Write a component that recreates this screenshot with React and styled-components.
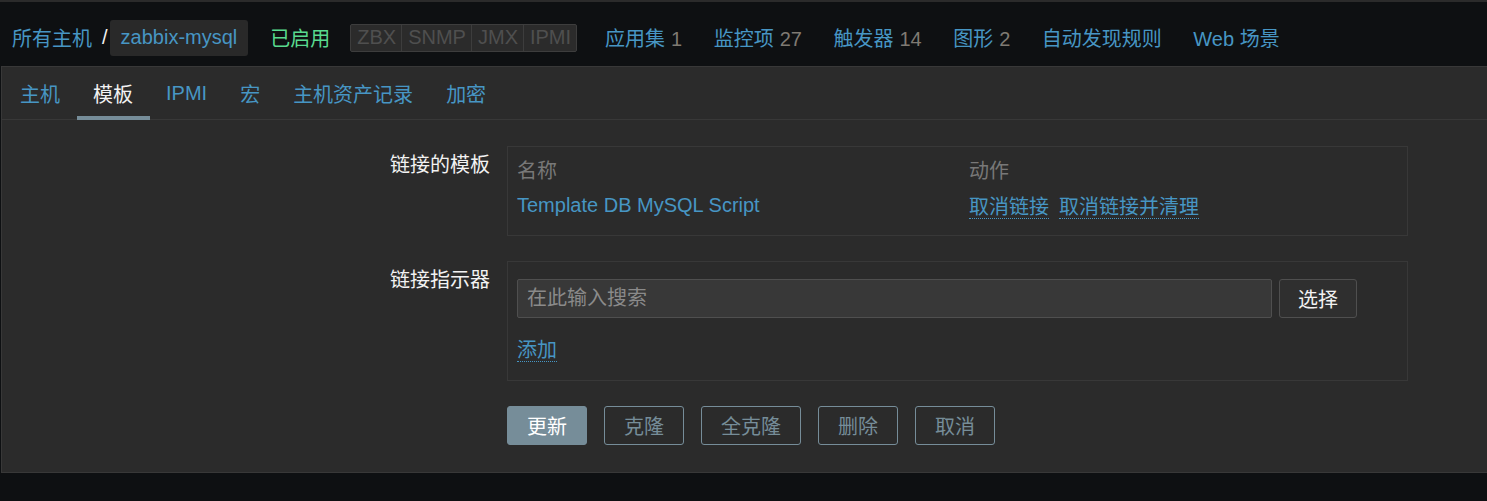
import React from 'react';
import styled, { createGlobalStyle } from 'styled-components';


const GlobalStyle = createGlobalStyle`
  html, body {
    margin: 0;
    padding: 0;
    background: #0e1012;
  }

  body {
    font-family: "Liberation Sans", Arial, "Noto Sans CJK SC", sans-serif;
    font-size: 20px;
    color: #f2f2f2;
  }
`;

const headerLinks = [
  { title: '应用集', count: 1 },
  { title: '监控项', count: 27 },
  { title: '触发器', count: 14 },
  { title: '图形', count: 2 },
  { title: '自动发现规则' },
  { title: 'Web 场景' },
];

const tabs = ['主机', '模板', 'IPMI', '宏', '主机资产记录', '加密'];

const interfaces = ['ZBX', 'SNMP', 'JMX', 'IPMI'];

const actions = [
  { title: '更新', primary: true },
  { title: '克隆' },
  { title: '全克隆' },
  { title: '删除' },
  { title: '取消' },
];


const Page = styled.div`
  border-top: 2px solid #2b2b2b;
  padding-bottom: 28px;
`;

const Header = styled.header`
  display: flex;
  align-items: center;
  height: 64px;
  padding: 7px 0 0 12px;
  box-sizing: border-box;
  white-space: nowrap;
`;

const Breadcrumbs = styled.div`
  display: flex;
  align-items: center;
  margin-right: 22px;

  .crumb__sep {
    margin: 0 2px 0 10px;
    color: #f2f2f2;
  }
`;

const Link = styled.a`
  color: #4796c4;
  text-decoration: none;
  cursor: pointer;
`;

const CurrentHost = styled.span`
  display: inline-flex;
  align-items: center;
  height: 36px;
  padding: 0 11px;
  border-radius: 3px;
  background: #292929;
  color: #4796c4;
`;

const Status = styled.span`
  color: #59db8f;
  margin-right: 20px;
`;

const Availability = styled.div`
  display: flex;
  height: 26px;
  margin-right: 28px;
  border: 1px solid #3d3d3d;
  border-radius: 2px;
  background: #2b2b2b;
`;

const AvailabilityItem = styled.span`
  display: flex;
  align-items: center;
  padding: 0 5px 0 6px;
  color: #4f4f4f;
  border-left: ${(props) => (props.first ? 'none' : '1px solid #3d3d3d')};
`;

const HeaderLinks = styled.nav`
  display: flex;
  gap: 31.5px;
`;

const Count = styled.span`
  margin-left: 6px;
  color: #7f7a72;
`;

const Panel = styled.main`
  margin-left: 1px;
  border: 1px solid #383838;
  border-right: none;
  background: #2b2b2b;
`;

const TabBar = styled.ul`
  display: flex;
  margin: 0;
  padding: 0 0 0 1.5px;
  height: 53px;
  list-style: none;
  border-bottom: 1px solid #383838;
  box-sizing: border-box;
`;

const Tab = styled.li`
  position: relative;
  display: flex;
  align-items: center;
  padding: 0 16.5px;
  color: ${(props) => (props.active ? '#f2f2f2' : '#4796c4')};

  &::after {
    content: '';
    display: ${(props) => (props.active ? 'block' : 'none')};
    position: absolute;
    left: 0;
    right: 0;
    bottom: -1px;
    height: 4px;
    background: #768d99;
  }
`;

const Form = styled.div`
  display: grid;
  grid-template-columns: 488px 901px;
  column-gap: 17px;
  row-gap: 25px;
  padding: 26px 0 27px;
`;

const Label = styled.label`
  text-align: right;
  padding-top: ${(props) => props.offset}px;
  line-height: 24px;
`;

const FieldBox = styled.div`
  border: 1px solid #383838;
  padding: ${(props) => props.padding};
`;

const Table = styled.table`
  width: 100%;
  border-collapse: collapse;

  th {
    height: 34px;
    padding: 0;
    text-align: left;
    font-weight: normal;
    color: #787878;
  }

  td {
    height: 38px;
    padding: 0;
  }

  .col-name {
    width: 452px;
  }
`;

const DottedLink = styled(Link)`
  border-bottom: 1px dotted #4796c4;
  margin-right: ${(props) => props.gap || 0}px;
`;

const SearchRow = styled.div`
  display: flex;
  gap: 7px;
`;

const SearchInput = styled.input`
  width: 755px;
  height: 39px;
  box-sizing: border-box;
  padding: 0 9px;
  border: 1px solid #4f4f4f;
  border-radius: 2px;
  background: #383838;
  color: #f2f2f2;
  font: inherit;
  outline: none;

  &::placeholder {
    color: #8a8a8a;
  }
`;

const SelectButton = styled.button`
  width: 78px;
  height: 39px;
  border: 1px solid #4f4f4f;
  border-radius: 3px;
  background: #2f2f2f;
  color: #f2f2f2;
  font: inherit;
`;

const AddRow = styled.div`
  margin-top: 20px;
  line-height: 24px;
`;

const Buttons = styled.div`
  display: flex;
  gap: 17px;
`;

const Button = styled.button`
  height: 39px;
  padding: 0 19px;
  border: 1px solid #768d99;
  border-radius: 3px;
  background: ${(props) => (props.primary ? '#768d99' : 'transparent')};
  color: ${(props) => (props.primary ? '#ffffff' : '#768d99')};
  font: inherit;
`;


const App = () => {
  return (
    <Page>
      <GlobalStyle />
      <Header>
        <Breadcrumbs>
          <Link>所有主机</Link>
          <span className="crumb__sep">/</span>
          <CurrentHost>zabbix-mysql</CurrentHost>
        </Breadcrumbs>
        <Status>已启用</Status>
        <Availability>
          {interfaces.map((name, i) => (
            <AvailabilityItem key={name} first={i === 0}>{name}</AvailabilityItem>
          ))}
        </Availability>
        <HeaderLinks>
          {headerLinks.map((item) => (
            <span key={item.title}>
              <Link>{item.title}</Link>
              {item.count !== undefined && <Count>{item.count}</Count>}
            </span>
          ))}
        </HeaderLinks>
      </Header>

      <Panel>
        <TabBar>
          {tabs.map((tab) => (
            <Tab key={tab} active={tab === '模板'}>{tab}</Tab>
          ))}
        </TabBar>

        <Form>
          <Label offset={7}>链接的模板</Label>
          <FieldBox padding="5px 9px 11px">
            <Table>
              <thead>
                <tr>
                  <th className="col-name">名称</th>
                  <th>动作</th>
                </tr>
              </thead>
              <tbody>
                <tr>
                  <td><Link>Template DB MySQL Script</Link></td>
                  <td>
                    <DottedLink gap={10}>取消链接</DottedLink>
                    <DottedLink>取消链接并清理</DottedLink>
                  </td>
                </tr>
              </tbody>
            </Table>
          </FieldBox>

          <Label offset={7}>链接指示器</Label>
          <FieldBox padding="17px 9px 18px">
            <SearchRow>
              <SearchInput placeholder="在此输入搜索" />
              <SelectButton>选择</SelectButton>
            </SearchRow>
            <AddRow>
              <DottedLink>添加</DottedLink>
            </AddRow>
          </FieldBox>

          <div />
          <Buttons>
            {actions.map((action) => (
              <Button key={action.title} primary={action.primary}>{action.title}</Button>
            ))}
          </Buttons>
        </Form>
      </Panel>
    </Page>
  );
};


export default App;
